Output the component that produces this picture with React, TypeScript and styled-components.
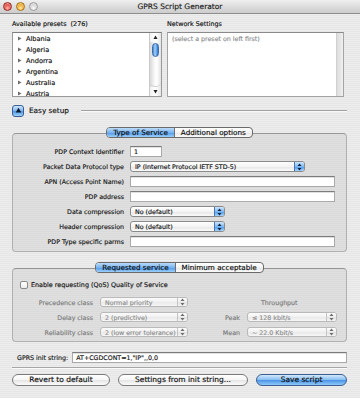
import styled, { createGlobalStyle } from "styled-components";

const GlobalStyle = createGlobalStyle`
  html, body {
    margin: 0;
    padding: 0;
    background: #e9e9e9;
  }
  body {
    font-family: "DejaVu Sans", "Liberation Sans", sans-serif;
    color: #111;
    -webkit-text-stroke-width: 0.15px;
  }
`;

const Window = styled.div`
  width: 360px;
  height: 398px;
  overflow: hidden;
  display: flex;
  flex-direction: column;
  background: repeating-linear-gradient(#ededed 0 1px, #e6e6e6 1px 2px);
`;

const TitleBar = styled.div`
  height: 13px;
  flex: none;
  border-bottom: 1px solid #8d8d8d;
  background: linear-gradient(#efefef, #d9d9d9 60%, #cdcdcd);
  display: grid;
  grid-template-columns: 1fr auto 1fr;
  align-items: center;
`;

const Lights = styled.div`
  display: flex;
  gap: 4px;
  padding-left: 3px;
`;

const Light = styled.div<{ $c1: string; $c2: string; $edge: string }>`
  width: 9px;
  height: 9px;
  box-sizing: border-box;
  border-radius: 50%;
  border: 1px solid ${(p) => p.$edge};
  background: radial-gradient(circle at 50% 75%, ${(p) => p.$c1} 0%, ${(p) => p.$c2} 75%);
  box-shadow: inset 0 1px 1px rgba(255, 255, 255, 0.6);
`;

const Title = styled.div`
  font-size: 7.5px;
  line-height: 13px;
  color: #1a1a1a;
`;

const Content = styled.div`
  display: flex;
  flex-direction: column;
  padding: 0 13px 0 12px;
`;

const PresetGrid = styled.div`
  margin-top: 6px;
  display: grid;
  grid-template-columns: 150px 177px;
  column-gap: 5px;
  row-gap: 3px;
`;

const SmallLabel = styled.div`
  font-size: 6.4px;
  line-height: 9px;
  color: #111;
  white-space: pre;
`;

const ListBox = styled.div`
  height: 65px;
  box-sizing: border-box;
  border: 1px solid #9a9a9a;
  border-top-color: #7e7e7e;
  background: #fff;
  display: flex;
  overflow: hidden;
`;

const ListItems = styled.div`
  flex: 1;
  display: flex;
  flex-direction: column;
`;

const ListRow = styled.div`
  height: 11px;
  flex: none;
  display: flex;
  align-items: center;
  gap: 4px;
  padding-left: 4px;
  font-size: 6.6px;
  color: #111;
`;

const Scrollbar = styled.div`
  width: 11px;
  flex: none;
  display: flex;
  flex-direction: column;
  align-items: center;
  border-left: 1px solid #c9c9c9;
  background: linear-gradient(90deg, #d8d8d8, #f7f7f7 40%, #ffffff 60%, #e2e2e2);
`;

const ScrollArrow = styled.div`
  height: 9px;
  width: 100%;
  display: flex;
  align-items: center;
  justify-content: center;
  background: linear-gradient(90deg, #f2f2f2, #ffffff 50%, #e6e6e6);
`;

const ScrollTrack = styled.div`
  flex: 1;
  width: 100%;
  display: flex;
  justify-content: center;
  padding-top: 1px;
  border-bottom: 1px solid #cfcfcf;
  border-bottom-left-radius: 5px;
  border-bottom-right-radius: 5px;
`;

const Thumb = styled.div`
  width: 7px;
  height: 14px;
  border-radius: 4px;
  box-sizing: border-box;
  border: 1px solid #3b6ea8;
  background: linear-gradient(90deg, #3f7fd0, #a9d2f8 40%, #7ab4ee 60%, #2f74cc);
`;

const NetBox = styled.div`
  height: 65px;
  box-sizing: border-box;
  border: 1px solid #a4a4a4;
  border-top-color: #8a8a8a;
  background: #fff;
  display: flex;
`;

const NetText = styled.div`
  flex: 1;
  padding: 1px 4px;
  font-size: 6.3px;
  line-height: 9px;
  color: #8c8c8c;
`;

const EmptyTrack = styled.div`
  width: 6px;
  flex: none;
  background: linear-gradient(90deg, #dcdcdc, #f0f0f0);
  border-left: 1px solid #d0d0d0;
`;

const EasyRow = styled.div`
  margin-top: 7px;
  height: 13px;
  display: flex;
  align-items: center;
`;

const Disclosure = styled.div`
  width: 12px;
  height: 12px;
  box-sizing: border-box;
  border-radius: 3px;
  border: 1px solid #3a5f95;
  background: linear-gradient(#cfe6fc, #7bb5ef 50%, #4d95e3 51%, #9fd0fb);
  display: flex;
  align-items: center;
  justify-content: center;
`;

const EasyText = styled.div`
  margin-left: 5px;
  font-size: 7.3px;
  color: #111;
`;

const Rule = styled.div`
  flex: 1;
  margin-left: 12px;
  height: 1px;
  background: #a2a2a2;
  border-bottom: 1px solid #f8f8f8;
`;

const TabSection = styled.div`
  margin-top: 10px;
  display: flex;
  flex-direction: column;
`;

const TabStrip = styled.div`
  align-self: center;
  position: relative;
  z-index: 1;
  height: 11px;
  box-sizing: border-box;
  display: flex;
  border: 1px solid #6a6a6a;
  border-radius: 4px;
  overflow: hidden;
  background: linear-gradient(#ffffff, #f3f3f3 50%, #e4e4e4 51%, #fbfbfb);
`;

const Tab = styled.div<{ $active?: boolean }>`
  padding: 0 6px;
  font-size: 7.2px;
  line-height: 9px;
  color: #0c0c0c;
  & + & {
    border-left: 1px solid #6f6f6f;
  }
  ${(p) =>
    p.$active &&
    `
    background: linear-gradient(#bcdcfa, #78b4f0 50%, #4d97e8 51%, #9dd0fc);
  `}
`;

const GroupBox = styled.div<{ $pad: string }>`
  margin-top: -5px;
  box-sizing: border-box;
  border: 1px solid #b0b0b0;
  border-top-color: #969696;
  border-radius: 4px;
  background: rgba(0, 0, 0, 0.05);
  padding: ${(p) => p.$pad};
`;

const FormGrid = styled.div`
  display: grid;
  grid-template-columns: 111px 1fr;
  grid-auto-rows: 11px;
  column-gap: 6px;
  row-gap: 4px;
  align-items: center;
`;

const FieldLabel = styled.div<{ $muted?: boolean }>`
  justify-self: end;
  font-size: 6.3px;
  white-space: nowrap;
  color: ${(p) => (p.$muted ? "#7b7b7b" : "#141414")};
`;

const TextField = styled.div<{ $w?: number }>`
  width: ${(p) => (p.$w ? `${p.$w}px` : "auto")};
  flex: ${(p) => (p.$w ? "none" : "1")};
  height: 11px;
  box-sizing: border-box;
  border: 1px solid #a9a9a9;
  border-top-color: #7c7c7c;
  background: #fff;
  box-shadow: inset 0 1px 0 #e0e0e0;
  padding-left: 3px;
  font-size: 6.3px;
  line-height: 9px;
  color: #111;
  white-space: nowrap;
  overflow: hidden;
`;

const Popup = styled.div<{ $w: number; $h: number; $disabled?: boolean }>`
  width: ${(p) => p.$w}px;
  height: ${(p) => p.$h}px;
  box-sizing: border-box;
  display: flex;
  align-items: stretch;
  border: 1px solid ${(p) => (p.$disabled ? "#b9b9b9" : "#8a8a8a")};
  border-radius: 3px;
  overflow: hidden;
  background: ${(p) =>
    p.$disabled
      ? "linear-gradient(#fbfbfb, #f1f1f1 50%, #e9e9e9 51%, #f6f6f6)"
      : "linear-gradient(#ffffff, #f4f4f4 50%, #e6e6e6 51%, #fafafa)"};
`;

const PopupText = styled.div<{ $disabled?: boolean }>`
  flex: 1;
  padding-left: 4px;
  font-size: 6.3px;
  display: flex;
  align-items: center;
  white-space: nowrap;
  overflow: hidden;
  color: ${(p) => (p.$disabled ? "#8d8d8d" : "#111")};
`;

const PopupCap = styled.div<{ $disabled?: boolean }>`
  width: 9px;
  flex: none;
  display: flex;
  align-items: center;
  justify-content: center;
  border-left: 1px solid ${(p) => (p.$disabled ? "#c4c4c4" : "#4a77b3")};
  background: ${(p) =>
    p.$disabled
      ? "linear-gradient(#fdfdfd, #eeeeee 50%, #e2e2e2 51%, #f4f4f4)"
      : "linear-gradient(#cde5fc, #82baf1 50%, #4f98e6 51%, #a4d3fc)"};
`;

const CheckRow = styled.div`
  display: flex;
  align-items: center;
  gap: 3px;
  padding-left: 7px;
  height: 9px;
`;

const CheckBox = styled.div`
  width: 8px;
  height: 8px;
  box-sizing: border-box;
  border: 1px solid #8a8a8a;
  border-radius: 2px;
  background: linear-gradient(#ffffff, #ececec);
`;

const CheckText = styled.div`
  font-size: 6.4px;
  color: #111;
`;

const QosGrid = styled.div`
  margin-top: 8px;
  display: grid;
  grid-template-columns: 80px 88px 1fr 90px;
  grid-auto-rows: 10px;
  column-gap: 7px;
  row-gap: 5px;
  align-items: center;
  padding-right: 9px;
`;

const Heading = styled.div`
  justify-self: start;
  margin-left: 14px;
  font-size: 6.3px;
  color: #7b7b7b;
`;

const InitRow = styled.div`
  margin-top: 10px;
  padding-left: 5px;
  display: flex;
  align-items: center;
  gap: 4px;
`;

const Separator = styled.div`
  margin-top: 4px;
  height: 1px;
  background: #a6a6a6;
  border-bottom: 1px solid #fafafa;
`;

const ButtonRow = styled.div`
  margin-top: 5px;
  display: flex;
  gap: 8px;
`;

const PushButton = styled.div<{ $w: number; $primary?: boolean }>`
  width: ${(p) => p.$w}px;
  height: 12px;
  box-sizing: border-box;
  border-radius: 6px;
  border: 1px solid ${(p) => (p.$primary ? "#3d5f8f" : "#7a7a7a")};
  background: ${(p) =>
    p.$primary
      ? "linear-gradient(#d2e8fd, #8cc1f3 45%, #4f97e6 55%, #8fc8fb)"
      : "linear-gradient(#ffffff, #f6f6f6 45%, #e6e6e6 55%, #fbfbfb)"};
  font-size: 7.5px;
  line-height: 10px;
  text-align: center;
  color: #111;
  white-space: nowrap;
`;

const UpDown = ({ color }: { color: string }) => (
  <svg width="5" height="8" viewBox="0 0 5 8">
    <path d="M2.5 0.5 L4.5 3 L0.5 3 Z" fill={color} />
    <path d="M2.5 7.5 L4.5 5 L0.5 5 Z" fill={color} />
  </svg>
);

const Tri = ({ dir, color, size }: { dir: "up" | "down" | "right"; color: string; size: number }) => {
  const d =
    dir === "up" ? "M5 1 L9 8 L1 8 Z" : dir === "down" ? "M1 2 L9 2 L5 9 Z" : "M2 1 L9 5 L2 9 Z";
  return (
    <svg width={size} height={size} viewBox="0 0 10 10">
      <path d={d} fill={color} />
    </svg>
  );
};

const countries = ["Albania", "Algeria", "Andorra", "Argentina", "Australia", "Austria"];

const SelectBox = ({ w, h, text, disabled }: { w: number; h: number; text: string; disabled?: boolean }) => (
  <Popup $w={w} $h={h} $disabled={disabled}>
    <PopupText $disabled={disabled}>{text}</PopupText>
    <PopupCap $disabled={disabled}>
      <UpDown color={disabled ? "#6d6d6d" : "#10233f"} />
    </PopupCap>
  </Popup>
);

export default function App() {
  return (
    <>
      <GlobalStyle />
      <Window>
        <TitleBar>
          <Lights>
            <Light $c1="#ffb0a8" $c2="#d3362c" $edge="#9b2a24" />
            <Light $c1="#ffe6a0" $c2="#e39a14" $edge="#a86f12" />
            <Light $c1="#fafafa" $c2="#c9c9c9" $edge="#9c9c9c" />
          </Lights>
          <Title>GPRS Script Generator</Title>
          <div />
        </TitleBar>

        <Content>
          <PresetGrid>
            <SmallLabel>Available presets  (276)</SmallLabel>
            <SmallLabel>Network Settings</SmallLabel>
            <ListBox>
              <ListItems>
                {countries.map((c) => (
                  <ListRow key={c}>
                    <Tri dir="right" color="#6e6e6e" size={5} />
                    {c}
                  </ListRow>
                ))}
              </ListItems>
              <Scrollbar>
                <ScrollArrow>
                  <Tri dir="up" color="#222" size={5} />
                </ScrollArrow>
                <ScrollTrack>
                  <Thumb />
                </ScrollTrack>
                <ScrollArrow>
                  <Tri dir="down" color="#222" size={5} />
                </ScrollArrow>
              </Scrollbar>
            </ListBox>
            <NetBox>
              <NetText>(select a preset on left first)</NetText>
              <EmptyTrack />
            </NetBox>
          </PresetGrid>

          <EasyRow>
            <Disclosure>
              <Tri dir="up" color="#0d1a2c" size={7} />
            </Disclosure>
            <EasyText>Easy setup</EasyText>
            <Rule />
          </EasyRow>

          <TabSection>
            <TabStrip>
              <Tab $active>Type of Service</Tab>
              <Tab>Additional options</Tab>
            </TabStrip>
            <GroupBox $pad="12px 0 4px 0">
              <FormGrid>
                <FieldLabel>PDP Context Identifier</FieldLabel>
                <TextField $w={32}>1</TextField>
                <FieldLabel>Packet Data Protocol type</FieldLabel>
                <SelectBox w={175} h={11} text="IP (Internet Protocol IETF STD-5)" />
                <FieldLabel>APN (Access Point Name)</FieldLabel>
                <TextField $w={205} />
                <FieldLabel>PDP address</FieldLabel>
                <TextField $w={205} />
                <FieldLabel>Data compression</FieldLabel>
                <SelectBox w={95} h={11} text="No (default)" />
                <FieldLabel>Header compression</FieldLabel>
                <SelectBox w={95} h={11} text="No (default)" />
                <FieldLabel>PDP Type specific parms</FieldLabel>
                <TextField $w={205} />
              </FormGrid>
            </GroupBox>
          </TabSection>

          <TabSection>
            <TabStrip>
              <Tab $active>Requested service</Tab>
              <Tab>Minimum acceptable</Tab>
            </TabStrip>
            <GroupBox $pad="11px 0 4px 0">
              <CheckRow>
                <CheckBox />
                <CheckText>Enable requesting (QoS) Quality of Service</CheckText>
              </CheckRow>
              <QosGrid>
                <FieldLabel $muted>Precedence class</FieldLabel>
                <SelectBox w={88} h={10} text="Normal priority" disabled />
                <div />
                <Heading>Throughput</Heading>
                <FieldLabel $muted>Delay class</FieldLabel>
                <SelectBox w={88} h={10} text="2 (predictive)" disabled />
                <FieldLabel $muted>Peak</FieldLabel>
                <SelectBox w={90} h={10} text="≤ 128 kbit/s" disabled />
                <FieldLabel $muted>Reliability class</FieldLabel>
                <SelectBox w={88} h={10} text="2 (low error tolerance)" disabled />
                <FieldLabel $muted>Mean</FieldLabel>
                <SelectBox w={90} h={10} text="~ 22.0 Kbit/s" disabled />
              </QosGrid>
            </GroupBox>
          </TabSection>

          <InitRow>
            <FieldLabel>GPRS init string:</FieldLabel>
            <TextField>AT+CGDCONT=1,"IP",,0,0</TextField>
          </InitRow>

          <Separator />

          <ButtonRow>
            <PushButton $w={98}>Revert to default</PushButton>
            <PushButton $w={130}>Settings from init string...</PushButton>
            <PushButton $w={91} $primary>
              Save script
            </PushButton>
          </ButtonRow>
        </Content>
      </Window>
    </>
  );
}
